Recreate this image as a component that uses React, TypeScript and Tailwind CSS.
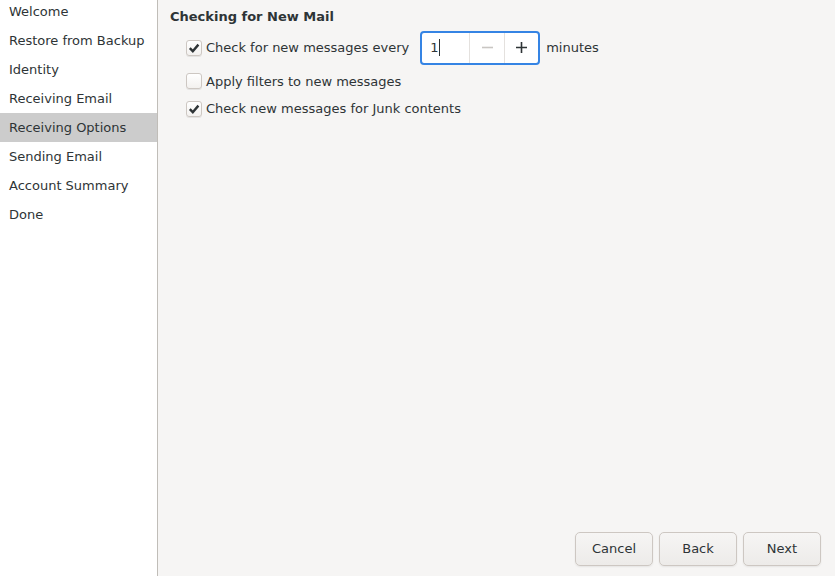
const pages = [
  "Welcome",
  "Restore from Backup",
  "Identity",
  "Receiving Email",
  "Receiving Options",
  "Sending Email",
  "Account Summary",
  "Done",
];

function Check({ checked }: { checked: boolean }) {
  return (
    <span className="flex h-[16px] w-[16px] shrink-0 items-center justify-center rounded-[3px] border border-[#cdc7c2] bg-gradient-to-b from-[#ffffff] to-[#f3f1ef] shadow-[0_1px_0_rgba(0,0,0,0.07)]">
      {checked && (
        <svg width="12" height="12" viewBox="0 0 12 12">
          <path d="M1.8 6.2 L4.8 9.2 L10.4 2.6" fill="none" stroke="#2e3436" strokeWidth="2.4" />
        </svg>
      )}
    </span>
  );
}

function Option({ checked, label }: { checked: boolean; label: string }) {
  return (
    <label className="flex items-center gap-[4px]">
      <Check checked={checked} />
      <span>{label}</span>
    </label>
  );
}

function WizardButton({ label }: { label: string }) {
  return (
    <button className="h-[34px] w-[78px] rounded-[5px] border border-[#cdc7c2] bg-gradient-to-b from-[#f6f5f4] to-[#edebe9] text-[#2e3436] shadow-[0_1px_2px_rgba(0,0,0,0.07)]">
      {label}
    </button>
  );
}

export default function App() {
  return (
    <div
      className="flex h-[576px] w-[835px] overflow-hidden bg-[#f6f5f4] text-[13px] text-[#2e3436]"
      style={{ fontFamily: '"DejaVu Sans", sans-serif' }}
    >
      <div className="w-[158px] shrink-0 border-r border-[#c0bdb8] bg-white">
        <ul className="-mt-[3px]">
          {pages.map((p) => (
            <li
              key={p}
              className={
                "flex h-[29px] items-center pl-[9px] " +
                (p === "Receiving Options" ? "bg-[#cccccc]" : "")
              }
            >
              {p}
            </li>
          ))}
        </ul>
      </div>
      <div className="flex flex-1 flex-col pl-[12px] pr-[14px] pb-[10px] pt-[7px]">
        <h2 className="font-bold">Checking for New Mail</h2>
        <div className="ml-[16px] mt-[4px] flex flex-col">
          <div className="flex items-center">
            <Option checked label="Check for new messages every" />
            <div className="ml-[11px] flex h-[34px] w-[120px] rounded-[4px] border-2 border-[#3584e4] bg-white">
              <span className="flex w-[47px] items-center pl-[8px]">
                1<span className="ml-[1px] h-[17px] w-[1px] bg-[#2e3436]" />
              </span>
              <span className="flex w-[35px] items-center justify-center border-l border-[#e4e1de] text-[#c9c6c3]">
                <svg width="11" height="11" viewBox="0 0 11 11">
                  <path d="M0 5.5 H11" stroke="currentColor" strokeWidth="1.6" />
                </svg>
              </span>
              <span className="flex flex-1 items-center justify-center border-l border-[#e4e1de]">
                <svg width="11" height="11" viewBox="0 0 11 11">
                  <path d="M0 5.5 H11 M5.5 0 V11" stroke="#2e3436" strokeWidth="1.6" />
                </svg>
              </span>
            </div>
            <span className="ml-[6px]">minutes</span>
          </div>
          <div className="mt-[7px]">
            <Option checked={false} label="Apply filters to new messages" />
          </div>
          <div className="mt-[8px]">
            <Option checked label="Check new messages for Junk contents" />
          </div>
        </div>
        <div className="mt-auto flex justify-end gap-[6px]">
          <WizardButton label="Cancel" />
          <WizardButton label="Back" />
          <WizardButton label="Next" />
        </div>
      </div>
    </div>
  );
}
